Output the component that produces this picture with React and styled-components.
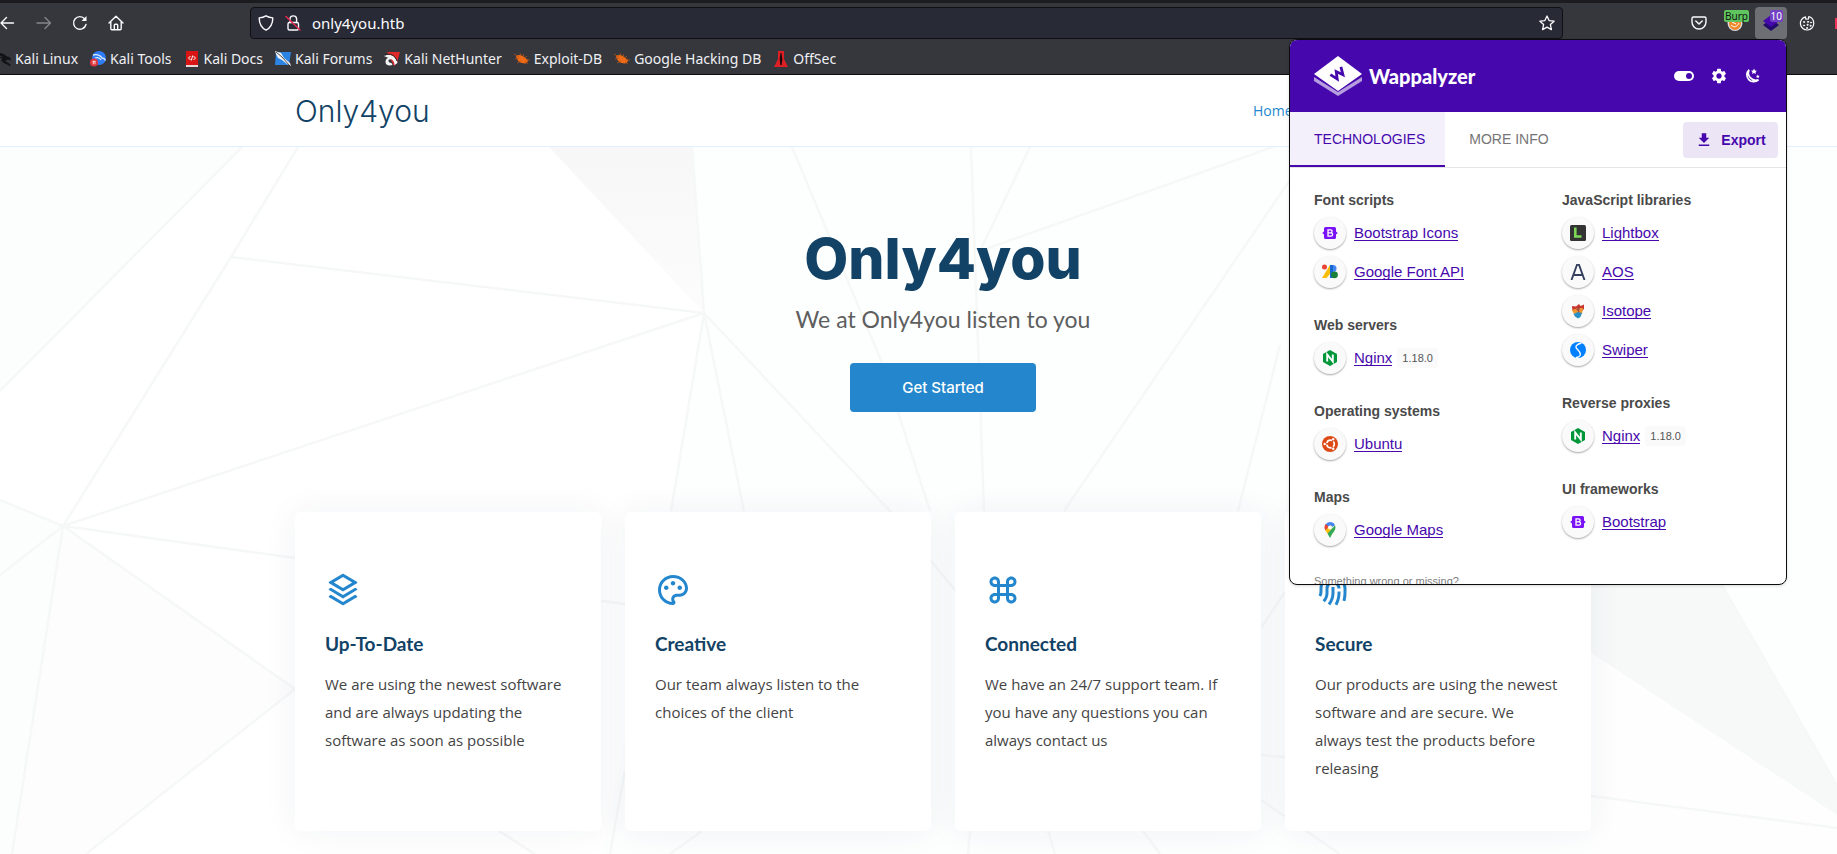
import React from 'react';
import styled, { createGlobalStyle } from 'styled-components';
import { RiStackLine, RiPaletteLine, RiCommandLine, RiFingerprintLine } from 'react-icons/ri';
import { MdSettings, MdDownload } from 'react-icons/md';

const GlobalStyle = createGlobalStyle`
  *, *::before, *::after { box-sizing: border-box; }
  body { margin: 0; background: #fff; overflow: hidden; font-family: "Open Sans", sans-serif; }
  a { text-decoration: none; }
  button { font: inherit; border: 0; padding: 0; background: none; color: inherit; }
  h1, h2, h3, p, ul { margin: 0; padding: 0; }
  ul { list-style: none; }
`;

const Window = styled.div`
  position: relative;
  display: flex;
  flex-direction: column;
  min-height: 100vh;
  overflow: hidden;
`;

/* Browser chrome */

const Chrome = styled.header`
  background: #35373d;
  border-top: 3px solid #1c1c20;
  border-bottom: 1px solid #0c0c0f;
  color: #fbfbfe;
  font: 14px/20px "Noto Sans", sans-serif;
`;

const Toolbar = styled.div`
  display: flex;
  align-items: center;
  height: 40px;
`;

const NavButtons = styled.div`
  display: flex;
  gap: 20px;
  width: 250px;
  svg { display: block; }
`;

const NavButton = styled.button`
  width: 16px;
  height: 16px;
  opacity: ${(p) => (p.disabled ? 0.4 : 1)};
  color: #fbfbfe;
`;

const UrlBar = styled.div`
  display: flex;
  align-items: center;
  flex: 1;
  height: 32px;
  padding: 0 7px;
  gap: 11px;
  background: #282a36;
  border: 1px solid #0f0f14;
  border-radius: 4px;
`;

const UrlInput = styled.input`
  flex: 1;
  min-width: 0;
  border: 0;
  padding: 0;
  outline: 0;
  background: none;
  color: #fbfbfe;
  font: 15px/20px "Noto Sans", sans-serif;
`;

const Extensions = styled.div`
  display: flex;
  align-items: center;
  justify-content: flex-end;
  gap: 6px;
  width: 274px;
  flex: none;
`;

const ExtButton = styled.button`
  position: relative;
  display: grid;
  place-items: center;
  width: ${(p) => (p.$wide ? 32 : 28)}px;
  height: 32px;
  border-radius: 4px;
  background: ${(p) => (p.$active ? '#6e6f75' : 'transparent')};
`;

const Badge = styled.span`
  position: absolute;
  top: 3px;
  right: ${(p) => (p.$right || 0)}px;
  height: 12px;
  padding: 0 1px;
  border-radius: 2px;
  background: ${(p) => p.$bg};
  color: ${(p) => p.$fg};
  font: 10px/12px "Noto Sans", sans-serif;
`;

const RedTab = styled.span`
  width: 2px;
  height: 11px;
  margin-left: 8px;
  background: #f0325a;
`;

const Bookmarks = styled.nav`
  display: flex;
  align-items: center;
  gap: 12px;
  height: 31px;
  margin-left: -5px;
`;

const Bookmark = styled.a`
  display: flex;
  align-items: center;
  gap: 4px;
  color: #f0f0f4;
  white-space: nowrap;
  svg { flex: none; }
`;

/* Site */

const SiteHeader = styled.div`
  display: flex;
  justify-content: center;
  padding: 0 12px 0 61px;
  background: #fff;
  border-bottom: 1px solid #e1f0fc;
`;

const Container = styled.div`
  width: 100%;
  max-width: 1296px;
`;

const HeaderRow = styled(Container)`
  display: flex;
  align-items: center;
  justify-content: space-between;
  height: 71px;
`;

const Brand = styled.a`
  color: #124265;
  font: 300 30px/36px "Inter", sans-serif;
`;

const SiteNav = styled.nav`
  width: 338px;
  font: 14px/20px "Open Sans", sans-serif;
  a { color: #2487ce; }
`;

const Hero = styled.main`
  position: relative;
  display: flex;
  flex: 1;
  flex-direction: column;
  align-items: center;
  padding: 76px 12px 22px 61px;
  background: #fff;
`;

const Backdrop = styled.svg`
  position: absolute;
  top: 0;
  left: 0;
  width: 100%;
  height: 100%;
`;

const Intro = styled.div`
  position: relative;
  display: flex;
  flex-direction: column;
  align-items: center;
  text-align: center;
`;

const Title = styled.h1`
  color: #124265;
  font: 800 57px/72px "Inter", sans-serif;
`;

const Subtitle = styled.h2`
  margin-top: 10px;
  color: #5e5e5e;
  font: 400 23px/28px "Lato", sans-serif;
`;

const StartLink = styled.a`
  margin-top: 30px;
  width: 186px;
  padding: 14px 0;
  border-radius: 4px;
  background: #2487ce;
  color: #fff;
  text-align: center;
  font: 500 15px/21px "Inter", sans-serif;
`;

const Cards = styled(Container)`
  position: relative;
  display: grid;
  grid-template-columns: repeat(4, 1fr);
  gap: 24px;
  margin-top: 100px;
`;

const Card = styled.article`
  min-height: 319px;
  padding: 60px 30px 30px;
  background: #fff;
  border-radius: 5px;
  box-shadow: 0 0 35px rgba(30, 50, 90, 0.06);
  svg { display: block; color: #2487ce; }
`;

const CardTitle = styled.h3`
  margin: 22px 0 12px;
  color: #124265;
  font: 700 19px/28px "Lato", sans-serif;
`;

const CardText = styled.p`
  color: #444;
  font: 15px/28px "Open Sans", sans-serif;
`;

/* Extension popup */

const Popup = styled.aside`
  position: absolute;
  top: 39px;
  right: 50px;
  width: 498px;
  height: 546px;
  overflow: hidden;
  border: 1px solid #0c0c0f;
  border-radius: 8px;
  background: #fff;
  box-shadow: 0 1px 3px rgba(0, 0, 0, 0.15);
  font-family: "Liberation Sans", Arial, sans-serif;
`;

const PopupHeader = styled.div`
  display: flex;
  align-items: center;
  height: 72px;
  padding: 0 26px 0 24px;
  background: #4608ad;
  color: #fff;
`;

const PopupName = styled.span`
  flex: 1;
  margin-left: 7px;
  font: 900 20px/24px "Lato", sans-serif;
`;

const PopupActions = styled.div`
  display: flex;
  align-items: center;
  gap: 16px;
  svg { display: block; }
`;

const Tabs = styled.div`
  display: flex;
  height: 56px;
  border-bottom: 1px solid #e4e4e6;
`;

const Tab = styled.button`
  height: 55px;
  padding: 0 20px 0 24px;
  background: ${(p) => (p.$active ? '#f4f0fb' : '#fff')};
  border-bottom: 2px solid ${(p) => (p.$active ? '#4608ad' : 'transparent')};
  color: ${(p) => (p.$active ? '#4608ad' : '#757575')};
  font: 14px/20px "Liberation Sans", Arial, sans-serif;
`;

const ExportButton = styled.button`
  display: flex;
  align-items: center;
  justify-content: center;
  gap: 8px;
  width: 95px;
  height: 36px;
  margin: 10px 8px 0 auto;
  border-radius: 4px;
  background: #ece5f6;
  color: #4608ad;
  font: 700 14px/20px "Liberation Sans", Arial, sans-serif;
`;

const Columns = styled.div`
  display: grid;
  grid-template-columns: 1fr 1fr;
  padding-top: 20px;
`;

const Column = styled.div`
  display: flex;
  flex-direction: column;
  gap: 25px;
  padding-left: 24px;
`;

const GroupTitle = styled.h3`
  margin-bottom: 5px;
  color: #4a4a4a;
  font: 700 14px/24px "Liberation Sans", Arial, sans-serif;
`;

const TechList = styled.ul`
  display: grid;
  gap: 7px;
`;

const Tech = styled.li`
  display: flex;
  align-items: center;
  height: 32px;
`;

const Bubble = styled.span`
  display: grid;
  place-items: center;
  width: 32px;
  height: 32px;
  margin-right: 8px;
  border-radius: 50%;
  background: #fafafa;
  box-shadow: 0 1px 2px rgba(0, 0, 0, 0.35);
`;

const TechLink = styled.a`
  border-bottom: 1px solid #4608ad;
  color: #4608ad;
  font: 15px/15px "Liberation Sans", Arial, sans-serif;
`;

const Version = styled.span`
  margin-left: 5px;
  padding: 0 5px;
  border-radius: 3px;
  background: #fafafa;
  color: #555;
  font: 11px/20px "Liberation Sans", Arial, sans-serif;
`;

const Feedback = styled.p`
  padding: 25px 24px 0;
  color: #808080;
  font: 11px/20px "Liberation Sans", Arial, sans-serif;
`;

/* Drawings */

const stroke = { fill: 'none', stroke: 'currentColor', strokeWidth: 1.4, strokeLinecap: 'round', strokeLinejoin: 'round' };

const Svg = ({ size = 16, children, ...rest }) => (
  <svg width={size} height={size} viewBox="0 0 16 16" aria-hidden="true" {...rest}>{children}</svg>
);

const ArrowLeft = () => <Svg {...stroke}><path d="M13.5 8H1M6.500 2.500L1 8l5.500 5.500" /></Svg>;
const ArrowRight = () => <Svg {...stroke}><path d="M1 8h13M9 2.500L14.500 8 9 13.500" /></Svg>;
const Reload = () => <Svg {...stroke}><path d="M14 9.500A6.300 6.300 0 1 1 12.800 4" /><path d="M14.500 1v5h-5z" fill="currentColor" stroke="none" /></Svg>;
const HomeIcon = () => (
  <Svg {...stroke}><path d="M1 8l7-6.800L15 8M2.800 6.500v7.300a1 1 0 0 0 1 1h8.400a1 1 0 0 0 1-1V6.500M6.300 14.500v-4.200a1 1 0 0 1 1-1h1.400a1 1 0 0 1 1 1v4.200" /></Svg>
);
const Shield = () => <Svg {...stroke}><path d="M8 .8C6 2 3.500 2.700 1.200 2.900c0 5 1.300 9.300 6.800 12.200 5.500-2.900 6.800-7.200 6.800-12.200C12.500 2.700 10 2 8 .8z" /></Svg>;
const LockOff = () => (
  <Svg {...stroke}><rect x="3" y="7.500" width="10.500" height="7.500" rx="1.500" /><path d="M5 7.500V4.200a3.300 3.300 0 0 1 6.600 0v3.300" /><path d="M1 1.500l14 13.500" stroke="#e22850" strokeWidth="1.600" /></Svg>
);
const Star = () => <Svg {...stroke} strokeWidth="1.300"><path d="M8 1l2.100 4.600 5 .6-3.700 3.400 1 5L8 12.100l-4.400 2.500 1-5L.9 6.200l5-.6z" /></Svg>;
const Pocket = () => <Svg {...stroke}><path d="M2.500 2h11a1.500 1.500 0 0 1 1.500 1.500V7A7 7 0 0 1 1 7V3.500A1.500 1.500 0 0 1 2.500 2zM4.800 6L8 9l3.200-3" /></Svg>;
const Burp = () => (
  <Svg><ellipse cx="8" cy="8" rx="7.500" ry="8" fill="#ddd" /><ellipse cx="8" cy="8.500" rx="6" ry="6.500" fill="#ef8a2c" /><path d="M4 10c3 3 6 2 8-2M5 7l4 2" stroke="#fff" fill="none" /></Svg>
);
const WapSmall = () => <Svg><path d="M0 10l8 6 8-6-8-6z" fill="#220b6b" /><path d="M0 6l8 6 8-6-8-6z" fill="#4608ad" /></Svg>;
const Cookie = () => (
  <Svg {...stroke} strokeWidth="1.200">
    <path d="M6.500 1.800A6.700 6.700 0 1 0 14.800 8.500c0-3.200-1.800-6-5-7L9.500 4 6.800 4.200z" />
    {[[5, 7], [9, 6.800], [12, 7.500], [5, 10.500], [8.500, 9.800], [11.500, 10.800], [8, 13]].map(([x, y]) => <circle key={`${x}-${y}`} cx={x} cy={y} r="0.600" fill="currentColor" strokeWidth="0.800" />)}
  </Svg>
);

const KaliDragon = () => <Svg><path d="M0 2c5 0 9 1 12 4 2 0 3 1 4 3-2-1-3-1-4-.500-3 0-2 3 1 3.500 1 .5 2 1.500 2 3-1.500-2-4-2-6-3.500C6 10 7 7.500 8.500 6.500 6 4 3 3 0 2zM4 6l4 1" fill="#111216" stroke="#111216" /></Svg>;
const ToolsIcon = () => (
  <Svg><circle cx="9" cy="7" r="7" fill="#2f7df6" /><path d="M3 4c4-1 7 0 9 3 2 0 3 1 3.500 2.500M5 7c3-1 5 0 6 2" stroke="#dcebff" strokeWidth="1.300" fill="none" /><circle cx="4" cy="11.500" r="4" fill="#e0343c" /><path d="M2.500 10.300h3M3.300 10.300v3M5 10.300v3" stroke="#fff" strokeWidth=".8" /></Svg>
);
const DocsIcon = () => <Svg><path d="M2 0h12v15H2z" fill="#d81414" /><path d="M2 14h12v2H2z" fill="#e8d5d5" /><path d="M6.500 5L4.500 7l2 2M9.500 5l2 2-2 2M8.700 4.500L7.300 9.500" stroke="#fff" fill="none" /></Svg>;
const ForumsIcon = () => <Svg><path d="M1 1h15l-2 13H0z" fill="#2b84e4" /><path d="M0 0l6 2 3 5 6 5 1 3-4-2-5-4-4-2-2-4z" fill="#f4f4f4" /><path d="M1 1l6 5 8 9" stroke="#222" fill="none" strokeWidth=".8" /></Svg>;
const HunterIcon = () => <Svg><path d="M3 1h13l-3 11-3 3z" fill="#e02a2a" /><path d="M0 5c5-3 12-1 13.500 7l-3 2c0-4-3-7-6-5-.5 2 1 3 3 3l1 2c-4 1-7 0-7-3 0-2 1-4 3-4z" fill="#f4f4f4" /><path d="M1 4c5-2 10 0 12 6" stroke="#222" fill="none" /></Svg>;
const BugIcon = () => <Svg><path d="M2 5c3-2 6-1 8 1l4 3c0 3-3 4-6 3-3 0-5-3-6-7z" fill="#ef6a14" /><path d="M0 3l5 3M1 8l4-1M3 12l4-2M9 3l1 3M13 5l-2 2M16 9h-4M14 13l-3-2M6 2l1 3" stroke="#b5541c" fill="none" strokeWidth=".8" /></Svg>;
const OffSecIcon = () => <Svg><path d="M5 0h6v8l4 8H1l4-8z" fill="#dd1f26" /><path d="M7.500 2h1l.8 6-.6 6H7.300L6.700 8z" fill="#1c0708" /></Svg>;

const WapLogo = () => (
  <svg width="48" height="40" viewBox="0 0 48 40" aria-hidden="true">
    <path d="M0 21v4l24 15 24-15v-4L24 36z" fill="#b59ddf" />
    <path d="M0 18L24 0l24 18-24 17z" fill="#fff" />
    <path d="M-6.500-4L-3.500 3.500 0-3 3.500 3.500 6.500-4" transform="translate(24 18) rotate(-36)" fill="none" stroke="#4608ad" strokeWidth="2.800" />
  </svg>
);
const Toggle = () => <svg width="20" height="20" viewBox="0 0 20 20" aria-hidden="true"><rect y="5" width="20" height="10" rx="5" fill="#fff" /><circle cx="15" cy="10" r="3" fill="#4608ad" /></svg>;
const Moon = () => (
  <Svg><path d="M5 1.800A6.600 6.600 0 1 0 14.500 11.800 7.500 7.500 0 0 1 5 1.800z" fill="none" stroke="#fff" strokeWidth="1.700" /><path d="M10 .5l.9 2 2.100.2-1.500 1.400.4 2-1.900-1-1.900 1 .4-2L7 2.700l2.100-.2zM13.800 6.500l.6 1.200 1.300.2-1 .9.3 1.300-1.200-.6-1.200.6.3-1.300-1-.9 1.300-.2z" fill="#fff" /></Svg>
);

const BootstrapIcon = () => <Svg><path d="M3.500 2h9A1.500 1.500 0 0 1 14 3.500v3L15.800 8 14 9.500v3a1.500 1.500 0 0 1-1.500 1.500h-9A1.500 1.500 0 0 1 2 12.500v-3L.2 8 2 6.500v-3A1.500 1.500 0 0 1 3.500 2z" fill="#7a12f7" /><path d="M6 4.800h2.600a1.500 1.500 0 0 1 0 3H6zM6 7.800h2.900a1.700 1.700 0 0 1 0 3.400H6z" fill="none" stroke="#fff" strokeWidth="1.300" /></Svg>;
const GFontsIcon = () => <Svg><circle cx="2.500" cy="3" r="2.500" fill="#ea4335" /><path d="M8 1v9l-3.500 4H0z" fill="#fbbc04" /><path d="M8 1h3v13H8z" fill="#1967d2" /><path d="M11 1a3.500 3.500 0 0 1 0 7z" fill="#4285f4" /><circle cx="12.500" cy="10.800" r="3.400" fill="#188038" /></Svg>;
const NginxIcon = () => <Svg><path d="M8 0l7 4v8l-7 4-7-4V4z" fill="#009639" /><path d="M5.200 11.500v-7l5.600 7v-7" fill="none" stroke="#fff" strokeWidth="1.900" /></Svg>;
const UbuntuIcon = () => <Svg><circle cx="8" cy="8" r="8" fill="#dd4814" /><circle cx="8.500" cy="8" r="3.800" fill="none" stroke="#fff" strokeWidth="1.700" strokeDasharray="6.400 1.560" strokeDashoffset="-4.700" /><circle cx="2.700" cy="8" r="1.200" fill="#fff" /><circle cx="11.200" cy="3.200" r="1.200" fill="#fff" /><circle cx="11.200" cy="12.800" r="1.200" fill="#fff" /></Svg>;
const MapsIcon = () => (
  <Svg><path d="M8 0a5.500 5.500 0 0 1 5 3.200L4 8.500 3.500 2.500A5.500 5.500 0 0 1 8 0z" fill="#4285f4" /><path d="M3.800 2L7 5 3.500 8.500A5.500 5.500 0 0 1 3.800 2z" fill="#ea4335" /><path d="M3.300 8.200L9 3l1 3.500-4.300 5.300z" fill="#fbbc04" /><path d="M13 3.200c1.500 4-1 6-3 9L8 16l-2.500-4.500z" fill="#34a853" /><circle cx="8" cy="5.500" r="2" fill="#fff" /></Svg>
);
const LightboxIcon = () => <Svg><rect width="16" height="16" rx="1.500" fill="#333" /><path d="M5.300 2.500v9h6.200" fill="none" stroke="#7ed957" strokeWidth="2.600" /></Svg>;
const AosIcon = () => <Svg><path d="M1.500 16L7 .8h2L14.500 16M3.800 11h8.400" fill="none" stroke="#35405f" strokeWidth="1.900" /></Svg>;
const IsotopeIcon = () => <Svg><path d="M2 3l4 .5L9 1l1.500 2 3.500-1.500V6l-2 2H2.500z" fill="#c9362f" /><path d="M2 7l6-2 5 0-1 6-4-1-4 1z" fill="#f0982e" /><path d="M3.500 11l4.500-2 4 1-1.500 4L8 15.500 5 13.500z" fill="#2a8fc4" /><path d="M6 6l4-2-1 6z" fill="#7b2456" opacity=".6" /></Svg>;
const SwiperIcon = () => <Svg><circle cx="8" cy="8" r="8" fill="#0080ff" /><path d="M11.500 1C7 2 4.500 4.500 7 7s4.500 4 3 6.500c-1 1.500-2.500 2-4 2" fill="none" stroke="#fff" strokeWidth="1.300" /></Svg>;

/* Data */

const bookmarks = [
  ['Kali Linux', KaliDragon],
  ['Kali Tools', ToolsIcon],
  ['Kali Docs', DocsIcon],
  ['Kali Forums', ForumsIcon],
  ['Kali NetHunter', HunterIcon],
  ['Exploit-DB', BugIcon],
  ['Google Hacking DB', BugIcon],
  ['OffSec', OffSecIcon],
];

const cards = [
  ['Up-To-Date', RiStackLine, 'We are using the newest software and are always updating the software as soon as possible'],
  ['Creative', RiPaletteLine, 'Our team always listen to the choices of the client'],
  ['Connected', RiCommandLine, 'We have an 24/7 support team. If you have any questions you can always contact us'],
  ['Secure', RiFingerprintLine, 'Our products are using the newest software and are secure. We always test the products before releasing'],
];

const techColumns = [
  [
    ['Font scripts', [['Bootstrap Icons', BootstrapIcon], ['Google Font API', GFontsIcon]]],
    ['Web servers', [['Nginx', NginxIcon, '1.18.0']]],
    ['Operating systems', [['Ubuntu', UbuntuIcon]]],
    ['Maps', [['Google Maps', MapsIcon]]],
  ],
  [
    ['JavaScript libraries', [['Lightbox', LightboxIcon], ['AOS', AosIcon], ['Isotope', IsotopeIcon], ['Swiper', SwiperIcon]]],
    ['Reverse proxies', [['Nginx', NginxIcon, '1.18.0']]],
    ['UI frameworks', [['Bootstrap', BootstrapIcon]]],
  ],
];

const HeroBackdrop = () => (
  <Backdrop viewBox="0 147 1837 707" preserveAspectRatio="xMidYMin slice" aria-hidden="true">
    <defs>
      <linearGradient id="wedge" x1="0" y1="0" x2="0" y2="1">
        <stop offset="0" stopColor="#f7f7f7" />
        <stop offset="1" stopColor="#fcfcfc" />
      </linearGradient>
    </defs>
    <path d="M0 147H242L0 391zM0 500L63 526 12 854H0z" fill="#fcfdfd" />
    <path d="M63 526L295 689 86 854H12z" fill="#fdfdfe" />
    <path d="M692 147H1837V854H602L671 511 704 313z" fill="#fdfefe" />
    <path d="M549 147H692L704 313z" fill="url(#wedge)" />
    <path d="M1591 653V450L1722 585 1837 786V815z" fill="#f7f9f9" />
    <path d="M1591 653L1837 815V854H1591z" fill="#fefefe" />
    <g fill="none" stroke="#f6f8f8" strokeWidth="2.500">
      <path d="M298 147L231 257 63 526 704 313 231 257M242 147L0 391M0 500L63 526 0 575M12 854L63 526 295 689 86 854M63 526L295 558 625 604" />
      <path d="M692 147L704 313 671 511M704 313L744 511M704 313L890 511 955 590M792 147L882 363 930 511M971 147L984 511M1030 147L980 251 1273 147M1290 180L1064 511M1280 345L1238 511" />
      <path d="M499 831L535 854M610 854L625 770M670 854L702 831M970 831L968 854M1048 831L1055 854M1143 831L1160 854M1261 755L1285 757M1261 800L1340 854M1261 628L1285 592M1722 585L1837 786M1591 796L1837 828" />
    </g>
  </Backdrop>
);

export default function App() {
  return (
    <>
      <GlobalStyle />
      <Window>
        <Chrome>
          <Toolbar>
            <NavButtons>
              <NavButton aria-label="Back"><ArrowLeft /></NavButton>
              <NavButton aria-label="Forward" disabled><ArrowRight /></NavButton>
              <NavButton aria-label="Reload"><Reload /></NavButton>
              <NavButton aria-label="Home"><HomeIcon /></NavButton>
            </NavButtons>
            <UrlBar>
              <Shield />
              <LockOff />
              <UrlInput aria-label="Address" defaultValue="only4you.htb" />
              <Star />
            </UrlBar>
            <Extensions>
              <ExtButton aria-label="Pocket" $wide><Pocket /></ExtButton>
              <ExtButton aria-label="Burp"><Burp /><Badge $bg="#5fc65f" $fg="#111">Burp</Badge></ExtButton>
              <ExtButton aria-label="Wappalyzer" $wide $active><WapSmall /><Badge $bg="#7240c4" $fg="#fff" $right={4}>10</Badge></ExtButton>
              <ExtButton aria-label="Cookies"><Cookie /></ExtButton>
              <RedTab />
            </Extensions>
          </Toolbar>
          <Bookmarks>
            {bookmarks.map(([name, Icon]) => (
              <Bookmark href="#" key={name}><Icon />{name}</Bookmark>
            ))}
          </Bookmarks>
        </Chrome>

        <SiteHeader>
          <HeaderRow>
            <Brand href="#">Only4you</Brand>
            <SiteNav><a href="#">Home</a></SiteNav>
          </HeaderRow>
        </SiteHeader>

        <Hero>
          <HeroBackdrop />
          <Intro>
            <Title>Only4you</Title>
            <Subtitle>We at Only4you listen to you</Subtitle>
            <StartLink href="#">Get Started</StartLink>
          </Intro>
          <Cards>
            {cards.map(([name, Icon, text]) => (
              <Card key={name}>
                <Icon size={36} />
                <CardTitle>{name}</CardTitle>
                <CardText>{text}</CardText>
              </Card>
            ))}
          </Cards>
        </Hero>

        <Popup>
          <PopupHeader>
            <WapLogo />
            <PopupName>Wappalyzer</PopupName>
            <PopupActions>
              <button aria-label="Toggle"><Toggle /></button>
              <button aria-label="Settings"><MdSettings size={18} /></button>
              <button aria-label="Dark mode"><Moon /></button>
            </PopupActions>
          </PopupHeader>
          <Tabs>
            <Tab $active>TECHNOLOGIES</Tab>
            <Tab>MORE INFO</Tab>
            <ExportButton><MdDownload size={18} />Export</ExportButton>
          </Tabs>
          <Columns>
            {techColumns.map((groups, i) => (
              <Column key={i}>
                {groups.map(([title, items]) => (
                  <section key={title}>
                    <GroupTitle>{title}</GroupTitle>
                    <TechList>
                      {items.map(([name, Icon, version]) => (
                        <Tech key={name}>
                          <Bubble><Icon /></Bubble>
                          <TechLink href="#">{name}</TechLink>
                          {version && <Version>{version}</Version>}
                        </Tech>
                      ))}
                    </TechList>
                  </section>
                ))}
              </Column>
            ))}
          </Columns>
          <Feedback>Something wrong or missing?</Feedback>
        </Popup>
      </Window>
    </>
  );
}
